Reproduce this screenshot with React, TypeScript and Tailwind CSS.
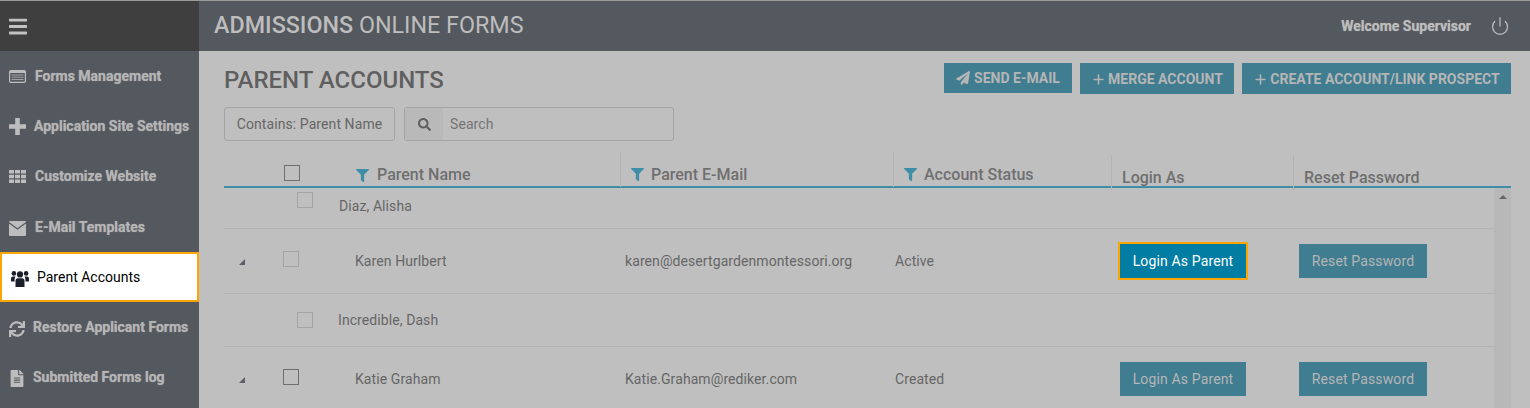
import { FaBars, FaFileAlt, FaFilter, FaPaperPlane, FaSearch, FaSync } from 'react-icons/fa';
import { Plus, Power } from 'lucide-react';
import type { ComponentType } from 'react';

type IconProps = { className?: string };

function ListIcon({ className }: IconProps) {
  return (
    <svg viewBox="0 0 17 13" className={className} fill="none" stroke="currentColor">
      <rect x="0.6" y="0.6" width="15.8" height="11.8" rx="1.2" strokeWidth="1.2" />
      <rect x="1" y="1" width="15" height="2" fill="currentColor" stroke="none" />
      <path d="M2.5 5h12M2.5 7.2h12M2.5 9.5h12" strokeWidth="1" opacity="0.75" />
    </svg>
  );
}

function PlusIcon({ className }: IconProps) {
  return (
    <svg viewBox="0 0 17 17" className={className} fill="currentColor">
      <path d="M6.2 0h4.6v6.2H17v4.6h-6.2V17H6.2v-6.2H0V6.2h6.2z" />
    </svg>
  );
}

function GridIcon({ className }: IconProps) {
  return (
    <svg viewBox="0 0 17 13" className={className} fill="currentColor">
      <path d="M0 0h5v3.6H0zM6 0h5v3.6H6zM12 0h5v3.6h-5zM0 4.7h5v3.6H0zM6 4.7h5v3.6H6zM12 4.7h5v3.6h-5zM0 9.4h5V13H0zM6 9.4h5V13H6zM12 9.4h5V13h-5z" />
    </svg>
  );
}

function EnvelopeIcon({ className }: IconProps) {
  return (
    <svg viewBox="0 0 17 15" className={className} fill="currentColor">
      <path d="M1 0h15a1 1 0 0 1 1 1L8.500 7.200 0 1a1 1 0 0 1 1-1z" />
      <path d="M0 2.600l8.500 6.200L17 2.600V14a1 1 0 0 1-1 1H1a1 1 0 0 1-1-1z" />
    </svg>
  );
}

function UsersIcon({ className }: IconProps) {
  return (
    <svg viewBox="0 0 18 17" className={className} fill="currentColor">
      <circle cx="2.900" cy="3.400" r="2.300" />
      <circle cx="15.100" cy="3.400" r="2.300" />
      <circle cx="9" cy="4.400" r="3.100" />
      <path d="M0 11.500V8.500Q0 6.500 2 6.500H4.500Q3.600 7.800 3.600 9.500V11.500zM18 11.500V8.500Q18 6.500 16 6.500H13.500Q14.400 7.800 14.400 9.500V11.500z" />
      <path d="M4.500 17V11Q4.500 8.300 7 8.300H11Q13.500 8.300 13.500 11V17z" />
    </svg>
  );
}

const navItems: { label: string; icon: ComponentType<IconProps>; iconSize: string; gap: string; active?: boolean }[] = [
  { label: 'Forms Management', icon: ListIcon, iconSize: 'w-[17px] h-[13px]', gap: 'gap-[9px]' },
  { label: 'Application Site Settings', icon: PlusIcon, iconSize: 'w-[17px] h-[17px]', gap: 'gap-[8px]' },
  { label: 'Customize Website', icon: GridIcon, iconSize: 'w-[17px] h-[13px]', gap: 'gap-[9px]' },
  { label: 'E-Mail Templates', icon: EnvelopeIcon, iconSize: 'w-[17px] h-[15px] mt-[3px]', gap: 'gap-[9px]' },
  { label: 'Parent Accounts', icon: UsersIcon, iconSize: 'w-[18px] h-[17px] mt-[3px]', gap: 'gap-[8px]', active: true },
  { label: 'Restore Applicant Forms', icon: FaSync, iconSize: 'w-[16px] h-[16px] mt-[3px]', gap: 'gap-[8px]' },
  { label: 'Submitted Forms log', icon: FaFileAlt, iconSize: 'w-[16px] h-[17px] mt-[2px]', gap: 'gap-[8px]' },
];

const columns = 'grid grid-cols-[396px_273px_218px_182px_1fr]';

function Checkbox({ strong }: { strong?: boolean }) {
  return <span className={`block w-4 h-4 bg-[#bfbfbf] border ${strong ? 'border-[#6f6f6f]' : 'border-[#a3a3a3]'}`} />;
}

function ActionButton({ label, width, focused }: { label: string; width: string; focused?: boolean }) {
  return (
    <button
      className={`block h-[34px] text-[14px] tracking-[0.01em] leading-none ${width} ${
        focused
          ? 'bg-[#017ca3] text-white outline-2 outline-[#ffa500]'
          : 'bg-[#417d91] text-[#b5b5b5]'
      }`}
    >
      {label}
    </button>
  );
}

function HeaderCell({ label, filter }: { label: string; filter?: boolean }) {
  return (
    <div className={`h-[35px] border-l border-[#b3b3b3] flex gap-[7px] pl-[10px] text-[16px] font-medium text-[#6f6f6f] ${filter ? 'items-center pt-[10px]' : 'items-end translate-y-[3px]'}`}>
      {filter && <FaFilter className="w-[13px] h-[13px] text-[#3f8ea8]" />}
      <span>{label}</span>
    </div>
  );
}

function ParentRow({ name, email, status }: { name: string; email: string; status: string }) {
  return (
    <div className="grid grid-cols-[396px_273px_218px_182px_1fr] items-center h-full text-[14px] tracking-[0.006em] text-[#666666]">
      <div className="flex items-center">
        <span className="ml-[15px] w-0 h-0 border-l-[6px] border-l-transparent border-b-[6px] border-b-[#5f5c6b] mt-[2px]" />
        <span className="ml-[38px] -mt-[4px]"><Checkbox strong={name === 'Katie Graham'} /></span>
        <span className="ml-[56px]">{name}</span>
      </div>
      <div className="pl-[5px]">{email}</div>
      <div className="pl-[2px]">{status}</div>
      <div className="pl-[9px]">
        <ActionButton label="Login As Parent" width="w-[126px]" focused={name === 'Karen Hurlbert'} />
      </div>
      <div className="pl-[6px]">
        <ActionButton label="Reset Password" width="w-[128px]" />
      </div>
    </div>
  );
}

export default function App() {
  return (
    <div className="w-[1530px] h-[408px] overflow-hidden flex flex-col bg-[#bfbfbf] border-t border-[#9a9a9a] font-['Roboto',sans-serif]">
      <header className="h-[50px] shrink-0 flex bg-[#54585f]">
        <div className="w-[199px] bg-[#3f3f3f] flex items-center pl-[9px]">
          <FaBars className="w-[18px] h-[21px] text-[#c2c2c2]" />
        </div>
        <div className="flex-1 flex items-center pl-[15px] pr-[20px] text-[#bdbdbd]">
          <h1 className="text-[23.3px] leading-none">
            <span className="font-medium">ADMISSIONS</span> ONLINE FORMS
          </h1>
          <span className="ml-auto text-[14px] font-bold [text-shadow:0_0_1px_#a0a0a0]">Welcome Supervisor</span>
          <Power className="ml-[19px] w-5 h-5" strokeWidth={1.5} />
        </div>
      </header>

      <div className="flex-1 flex min-h-0">
        <nav className="w-[199px] shrink-0 bg-[#54585f] flex flex-col">
          {navItems.map(({ label, icon: Icon, iconSize, gap, active }) => (
            <div
              key={label}
              className={`h-[50.2px] shrink-0 flex items-center pt-[1px] pl-[9px] text-[14px] ${gap} ${
                active
                  ? 'bg-white border-2 border-[#ffa500] pl-[7px] text-black'
                  : 'font-bold text-[#b5b5b5] [text-shadow:0_0_1px_#a0a0a0]'
              }`}
            >
              <Icon className={`shrink-0 ${iconSize} ${active ? 'text-[#1a1f2b]' : 'text-[#bdbdbd]'}`} />
              <span>{label}</span>
            </div>
          ))}
        </nav>

        <main className="flex-1 min-w-0 pl-[25px] pr-[19px] flex flex-col">
          <div className="h-[56px] shrink-0 flex items-start justify-between pt-[12px]">
            <h2 className="text-[24px] leading-[34px] font-medium text-[#5f5f5f]">PARENT ACCOUNTS</h2>
            <div className="flex gap-2 text-[14px] font-bold text-[#b5b5b5]">
              <button className="h-[30px] w-[128px] bg-[#417d91] flex items-center justify-center gap-[4px]">
                <FaPaperPlane className="w-[14px] h-[14px]" />
                SEND E-MAIL
              </button>
              <button className="h-[31px] w-[154px] bg-[#417d91] flex items-center justify-center gap-[2px] pt-[1px]">
                <Plus className="w-[15px] h-[15px]" strokeWidth={2.5} />
                MERGE ACCOUNT
              </button>
              <button className="h-[31px] w-[269px] bg-[#417d91] flex items-center justify-center gap-[2px] pt-[1px]">
                <Plus className="w-[15px] h-[15px]" strokeWidth={2.5} />
                CREATE ACCOUNT/LINK PROSPECT
              </button>
            </div>
          </div>

          <div className="h-[34px] shrink-0 flex gap-[9px] text-[14px] tracking-[0.006em] text-[#666666]">
            <div className="w-[171px] border border-[#a3a3a3] rounded-[3px] flex items-center justify-center">Contains: Parent Name</div>
            <div className="w-[270px] border border-[#a3a3a3] rounded-[3px] flex items-center overflow-hidden">
              <span className="w-[38px] h-full bg-[#b9b9b9] flex items-center justify-center"><FaSearch className="w-[13px] h-[13px] text-[#606060]" /></span>
              <span className="pl-[7px] text-[#757575]">Search</span>
            </div>
          </div>

          <div className={`${columns} mt-[11px] shrink-0 border-b-2 border-[#3f8ea8] h-[36px]`}>
            <div className="flex items-center pl-[60px] pt-[7px] -mr-px">
              <Checkbox strong />
              <div className="flex items-center gap-[8px] ml-[56px] text-[16px] font-medium text-[#6f6f6f] pt-[4px]">
                <FaFilter className="w-[13px] h-[13px] text-[#3f8ea8]" />
                <span>Parent Name</span>
              </div>
            </div>
            <HeaderCell label="Parent E-Mail" filter />
            <HeaderCell label="Account Status" filter />
            <HeaderCell label="Login As" />
            <HeaderCell label="Reset Password" />
          </div>

          <div className="flex-1 min-h-0 flex">
            <div className="flex-1 min-w-0 flex flex-col text-[14px] tracking-[0.006em] text-[#666666]">
              <div className="h-[41px] shrink-0 border-b border-[#b3b3b3] flex items-start pt-[4px] pl-[73px]">
                <Checkbox />
                <span className="ml-[26px] mt-[4px]">Diaz, Alisha</span>
              </div>
              <div className="h-[65px] shrink-0 border-b border-[#b3b3b3]">
                <ParentRow name="Karen Hurlbert" email="karen@desertgardenmontessori.org" status="Active" />
              </div>
              <div className="h-[53px] shrink-0 border-b border-[#b3b3b3] flex items-center pl-[73px]">
                <Checkbox />
                <span className="ml-[25px]">Incredible, Dash</span>
              </div>
              <div className="h-[64px] shrink-0">
                <ParentRow name="Katie Graham" email="Katie.Graham@rediker.com" status="Created" />
              </div>
            </div>
            <div className="w-[17px] shrink-0 bg-[#b8b8b8] flex justify-center pt-[7px]">
              <span className="w-0 h-0 border-x-[4px] border-x-transparent border-b-[4px] border-b-[#666666]" />
            </div>
          </div>
        </main>
      </div>
    </div>
  );
}
